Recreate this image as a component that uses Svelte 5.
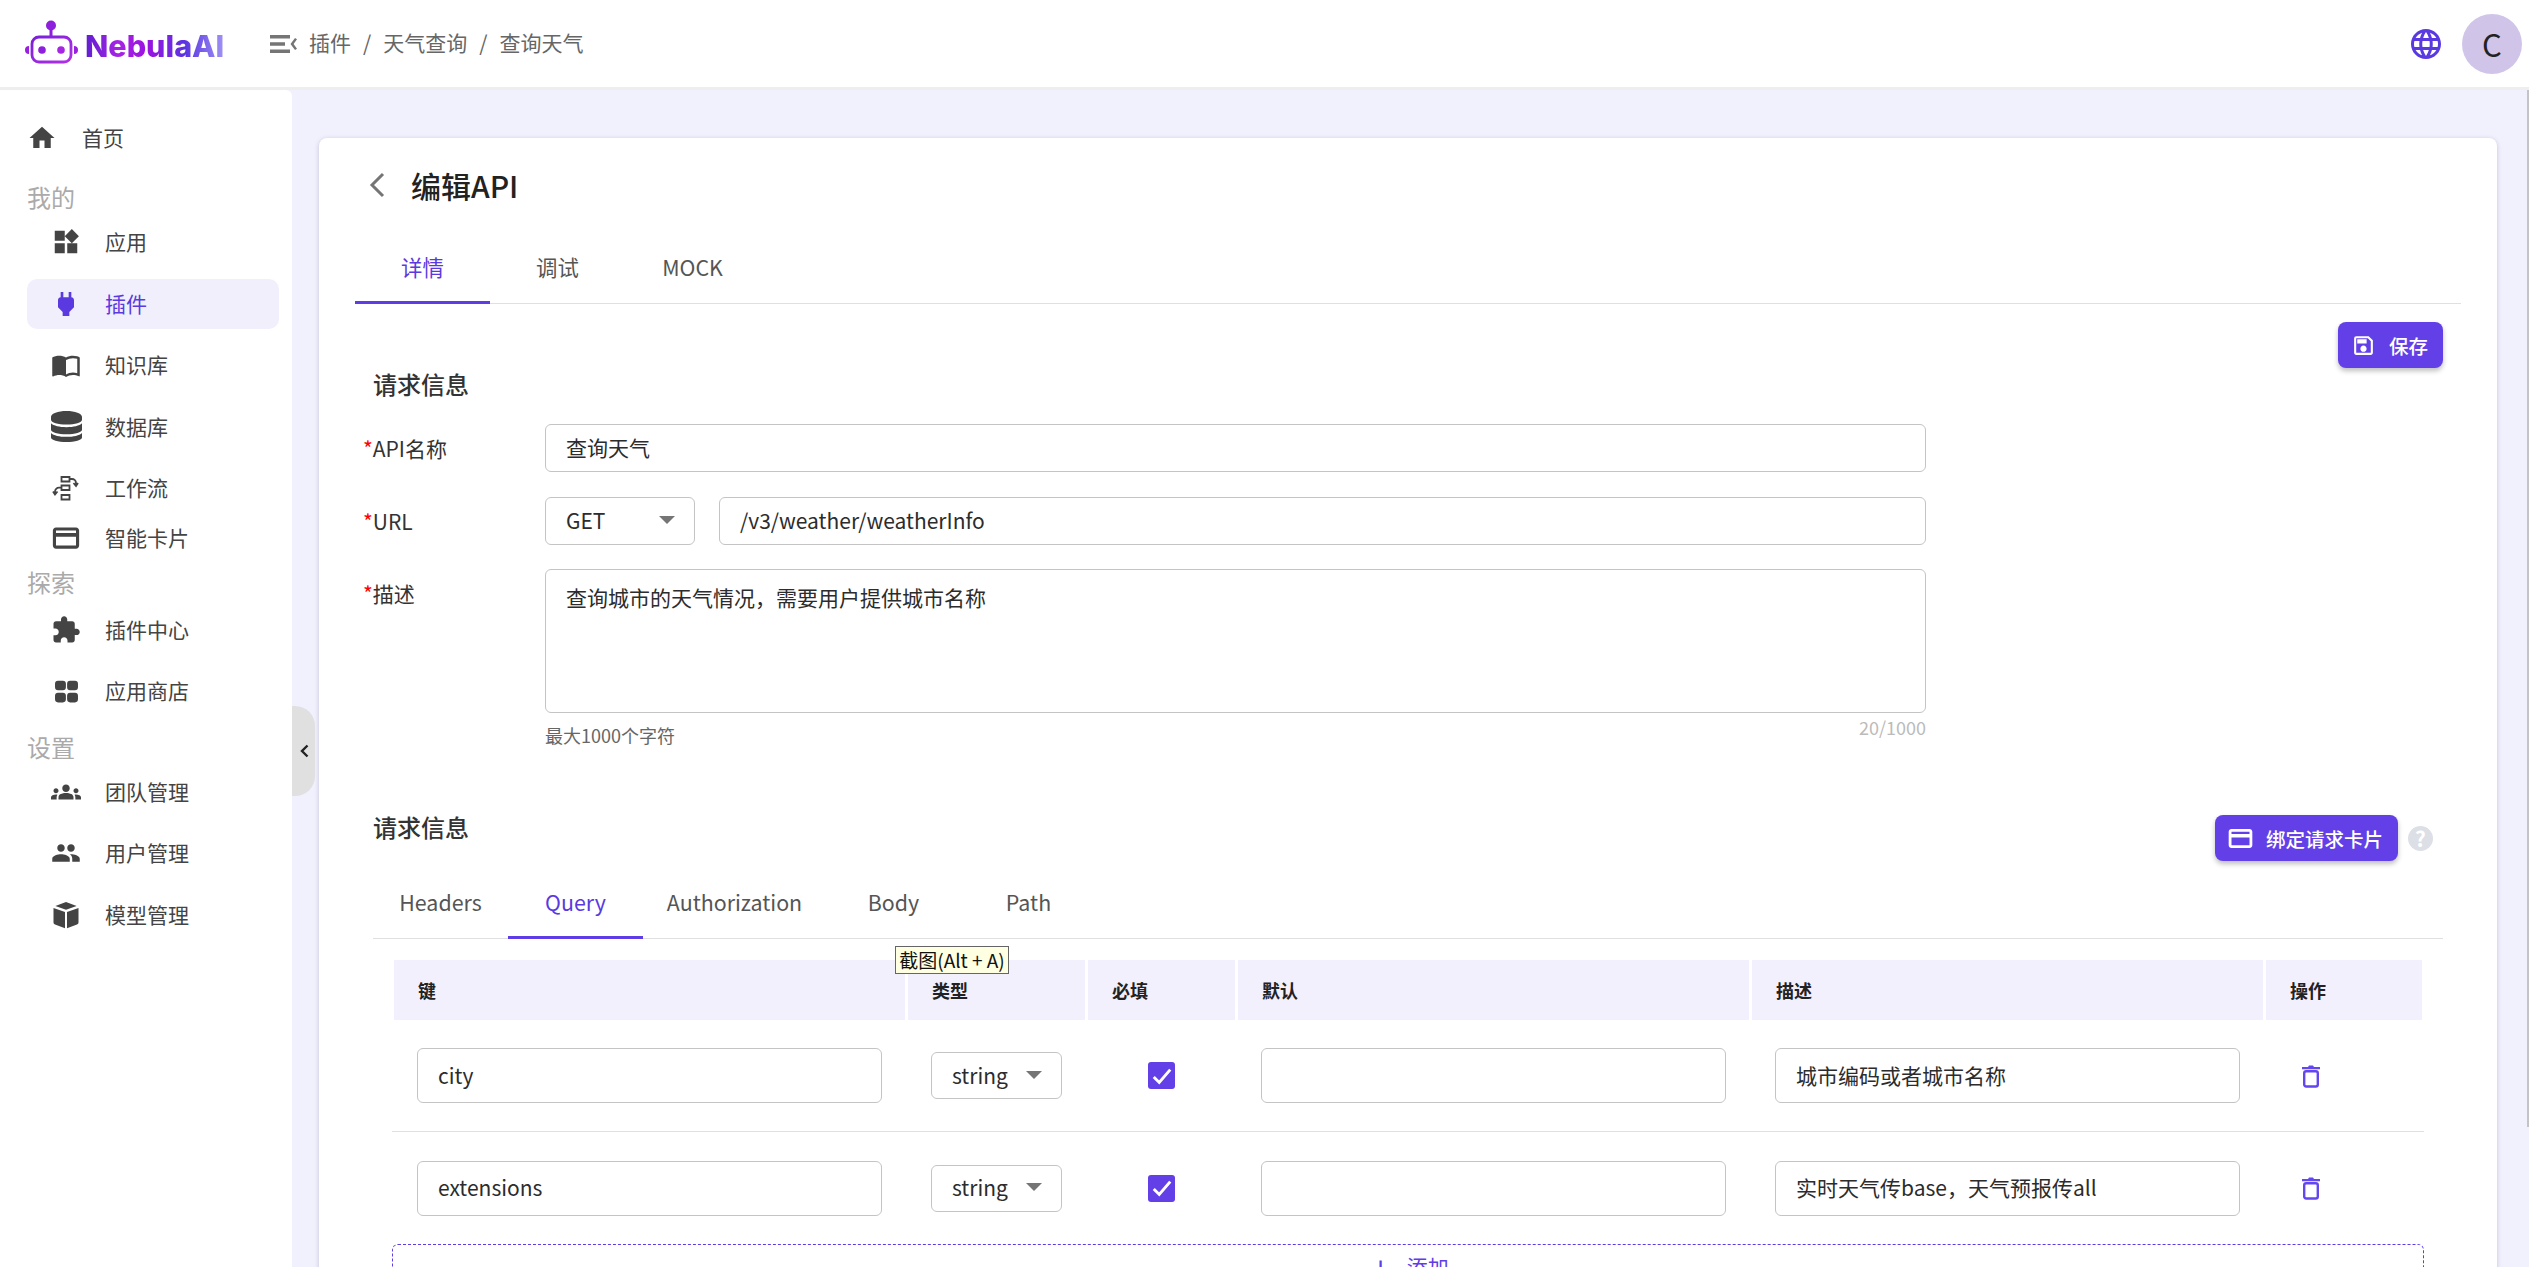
<script>
  const icons = {
    home: "M10 20v-6h4v6h5v-8h3L12 3 2 12h3v8z",
    widgets: "M13 13v8h8v-8h-8zM3 21h8v-8H3v8zM3 3v8h8V3H3zm13.66-1.31L11 7.34 16.66 13l5.66-5.66-5.66-5.65z",
    plug: "M16.01 7L16 3h-2v4h-4V3H8v4h-.01C7 6.99 6 7.99 6 8.99v5.49L9.5 18v3h5v-3l3.5-3.51v-5.5c0-1-1-2-1.99-1.99z",
    book: "M21 5c-1.11-.35-2.33-.5-3.5-.5-1.95 0-4.05.4-5.5 1.5-1.45-1.1-3.55-1.5-5.5-1.5S2.45 4.9 1 6v14.65c0 .25.25.5.5.5.1 0 .15-.05.25-.05C3.1 20.45 5.05 20 6.5 20c1.95 0 4.05.4 5.5 1.5 1.35-.85 3.8-1.5 5.5-1.5 1.65 0 3.35.3 4.75 1.05.1.05.15.05.25.05.25 0 .5-.25.5-.5V6c-.6-.45-1.25-.75-2-1zm0 13.5c-1.1-.35-2.3-.5-3.5-.5-1.7 0-4.15.65-5.5 1.5V8c1.35-.85 3.8-1.5 5.5-1.5 1.2 0 2.4.15 3.5.5v11.5z",
    db: "M0 4.5C0 2 5.4 0 12 0s12 2 12 4.5v2.3C24 9 18.6 10.5 12 10.5S0 9 0 6.8zM0 9.5c2 2 6.5 3 12 3s10-1 12-3v5c0 2-5.4 3.5-12 3.5S0 16.5 0 14.5zM0 17c2 2 6.5 3 12 3s10-1 12-3v3.5C24 22.5 18.6 24 12 24S0 22.5 0 20.5z",
    card: "M20 3.5H4C2.6 3.5 1.5 4.6 1.5 6v12c0 1.4 1.1 2.5 2.5 2.5h16c1.4 0 2.5-1.1 2.5-2.5V6c0-1.4-1.1-2.5-2.5-2.5zm0 14.5H4v-7h16v7zm0-10H4V6h16v2z",
    puzzle: "M20.5 11H19V7c0-1.1-.9-2-2-2h-4V3.5C13 2.12 11.88 1 10.5 1S8 2.12 8 3.5V5H4c-1.1 0-1.99.9-1.99 2v3.8H3.5c1.49 0 2.7 1.21 2.7 2.7s-1.21 2.7-2.7 2.7H2V20c0 1.1.9 2 2 2h3.8v-1.5c0-1.49 1.21-2.7 2.7-2.7 1.49 0 2.7 1.21 2.7 2.7V22H17c1.1 0 2-.9 2-2v-4h1.5c1.38 0 2.5-1.12 2.5-2.5S21.88 11 20.5 11z",
    apps: "M5 3h4a2.5 2.5 0 0 1 2.5 2.5v3A2.5 2.5 0 0 1 9 11H5a2.5 2.5 0 0 1-2.5-2.5v-3A2.5 2.5 0 0 1 5 3zM15 3h4a2.5 2.5 0 0 1 2.5 2.5v3A2.5 2.5 0 0 1 19 11h-4a2.5 2.5 0 0 1-2.5-2.5v-3A2.5 2.5 0 0 1 15 3zM5 13h4a2.5 2.5 0 0 1 2.5 2.5v3A2.5 2.5 0 0 1 9 21H5a2.5 2.5 0 0 1-2.5-2.5v-3A2.5 2.5 0 0 1 5 13zM15 13h4a2.5 2.5 0 0 1 2.5 2.5v3A2.5 2.5 0 0 1 19 21h-4a2.5 2.5 0 0 1-2.5-2.5v-3A2.5 2.5 0 0 1 15 13z",
    groups: "M12 12.75c1.63 0 3.07.39 4.24.9 1.08.48 1.76 1.56 1.76 2.73V18H6v-1.61c0-1.18.68-2.26 1.76-2.73 1.17-.52 2.61-.91 4.24-.91zM4 13c1.1 0 2-.9 2-2s-.9-2-2-2-2 .9-2 2 .9 2 2 2zm1.13 1.1c-.37-.06-.74-.1-1.13-.1-.99 0-1.93.21-2.78.58C.48 14.9 0 15.62 0 16.43V18h4.5v-1.61c0-.83.23-1.61.63-2.29zM20 13c1.1 0 2-.9 2-2s-.9-2-2-2-2 .9-2 2 .9 2 2 2zm4 3.43c0-.81-.48-1.53-1.22-1.85-.85-.37-1.79-.58-2.78-.58-.39 0-.76.04-1.13.1.4.68.63 1.46.63 2.29V18H24v-1.57zM12 6c1.66 0 3 1.34 3 3s-1.34 3-3 3-3-1.34-3-3 1.34-3 3-3z",
    people: "M16 11c1.66 0 2.99-1.34 2.99-3S17.66 5 16 5c-1.66 0-3 1.34-3 3s1.34 3 3 3zm-8 0c1.66 0 2.99-1.34 2.99-3S9.66 5 8 5C6.34 5 5 6.34 5 8s1.34 3 3 3zm0 2c-2.33 0-7 1.17-7 3.5V19h14v-2.5c0-2.33-4.67-3.5-7-3.5zm8 0c-.29 0-.62.02-.97.05 1.16.84 1.97 1.97 1.97 3.45V19h6v-2.5c0-2.33-4.67-3.5-7-3.5z",
    cube: "M12 1.5 20.5 4.7 12 7.8 3.5 4.7zM2 6.3l9.2 3.3V22.5L3.2 19.6A1.8 1.8 0 0 1 2 17.9zM22 6.3l-9.2 3.3V22.5l8-2.9a1.8 1.8 0 0 0 1.2-1.7z",
    flow: "M7.5 1h8v4.5h-8zM7.5 9.5h8V14h-8zM7.5 19h8v4.5h-8zM15.5 3h2.5a4 4 0 0 1 4 4v1.5M19.5 7l2.5 3 2-3M7.5 11.7H5a4 4 0 0 0-4 4v1.5M-1 15.5l2 3 2.5-3"
  };

  const nav = [
    { kind: "top", label: "首页", icon: "home" },
    { kind: "head", label: "我的", variant: "mine" },
    { label: "应用", icon: "widgets", size: 30 },
    { label: "插件", icon: "plug", size: 32, active: true },
    { label: "知识库", icon: "book" },
    { label: "数据库", icon: "db", size: 31 },
    { label: "工作流", icon: "flow", line: true, size: 24 },
    { kind: "slim", label: "智能卡片", icon: "card" },
    { kind: "head", label: "探索" },
    { label: "插件中心", icon: "puzzle" },
    { label: "应用商店", icon: "apps", size: 29 },
    { kind: "head", label: "设置", variant: "settings" },
    { label: "团队管理", icon: "groups" },
    { label: "用户管理", icon: "people" },
    { label: "模型管理", icon: "cube" }
  ];

  const crumbs = ["插件", "天气查询", "查询天气"];
  const paramTabs = ["Headers", "Query", "Authorization", "Body", "Path"];
  const columns = ["键", "类型", "必填", "默认", "描述", "操作"];
  const params = [
    { key: "city", type: "string", desc: "城市编码或者城市名称" },
    { key: "extensions", type: "string", desc: "实时天气传base，天气预报传all" }
  ];
</script>

<div class="page">
  <header class="topbar">
    <div class="brand">
      <svg class="logo" width="56" height="46" viewBox="0 0 56 46" aria-hidden="true">
        <defs>
          <linearGradient id="logoGrad" x1="0" y1="0" x2="1" y2="1">
            <stop offset="0" stop-color="#7a1fd8" />
            <stop offset="1" stop-color="#b030e8" />
          </linearGradient>
        </defs>
        <circle cx="27" cy="6.5" r="5" fill="#8e1fdc" />
        <rect x="25.5" y="10" width="3" height="8" fill="#8e1fdc" />
        <rect x="8" y="18" width="39" height="25" rx="7" fill="none" stroke="url(#logoGrad)" stroke-width="2.8" />
        <circle cx="18" cy="31" r="3.8" fill="#8e1fdc" />
        <circle cx="37" cy="31" r="3.8" fill="#a626e4" />
        <path d="M5 27v8a4 4 0 0 1 0-8zM50 27v8a4 4 0 0 0 0-8z" fill="#9a20e0" />
      </svg>
      <span class="wordmark">NebulaAI</span>
    </div>
    <svg class="menu-icon" width="27" height="18" viewBox="0 0 27 18" aria-hidden="true">
      <path d="M0 0h20v3.5H0zM0 7.2h15v3.5H0zM0 14.5h20V18H0zM27 4.2 23.6 9l3.4 4.8-2 1.2-4.5-6 4.5-6z" fill="#757575" />
    </svg>
    <nav class="crumbs">
      {#each crumbs as crumb, i}
        {#if i > 0}<span>/</span>{/if}
        <span>{crumb}</span>
      {/each}
    </nav>
    <div class="top-right">
      <svg width="36" height="36" viewBox="0 0 24 24" aria-hidden="true">
        <path fill="#5a3ae0" d="M11.99 2C6.47 2 2 6.48 2 12s4.47 10 9.99 10C17.52 22 22 17.52 22 12S17.52 2 11.99 2zm6.93 6h-2.95c-.32-1.25-.78-2.45-1.38-3.56 1.84.63 3.37 1.91 4.33 3.56zM12 4.04c.83 1.2 1.48 2.53 1.91 3.96h-3.82c.43-1.43 1.08-2.76 1.91-3.96zM4.26 14C4.1 13.36 4 12.69 4 12s.1-1.36.26-2h3.38c-.08.66-.14 1.32-.14 2 0 .68.06 1.34.14 2H4.26zm.82 2h2.95c.32 1.25.78 2.45 1.38 3.56-1.84-.63-3.37-1.9-4.33-3.56zm2.95-8H5.08c.96-1.66 2.49-2.93 4.33-3.56C8.81 5.55 8.35 6.75 8.03 8zM12 19.96c-.83-1.2-1.48-2.53-1.91-3.96h3.82c-.43 1.43-1.08 2.76-1.91 3.96zM14.34 14H9.66c-.09-.66-.16-1.32-.16-2 0-.68.07-1.35.16-2h4.68c.09.65.16 1.32.16 2 0 .68-.07 1.34-.16 2zm.25 5.56c.6-1.11 1.06-2.31 1.38-3.56h2.95c-.96 1.65-2.49 2.93-4.33 3.56zM16.36 14c.08-.66.14-1.32.14-2 0-.68-.06-1.34-.14-2h3.38c.16.64.26 1.31.26 2s-.1 1.36-.26 2h-3.38z" />
      </svg>
      <div class="avatar">C</div>
    </div>
  </header>

  <div class="body">
    <aside class="sidebar">
      {#each nav as item}
        {#if item.kind === "head"}
          <div class="nav-head {item.variant ?? ''}">{item.label}</div>
        {:else}
          <div class="nav-item {item.kind ?? ''}" class:active={item.active}>
            <span class="nav-icon">
              <svg width={item.size ?? 30} height={item.size ?? 30} viewBox="0 0 24 24" aria-hidden="true" class:line={item.line} overflow="visible">
                <path d={icons[item.icon]} />
              </svg>
            </span>
            <span class="nav-text">{item.label}</span>
          </div>
        {/if}
      {/each}
    </aside>

    <main class="main">
      <div class="card">
        <div class="title-row">
          <svg width="16" height="26" viewBox="0 0 16 26" aria-hidden="true">
            <path d="M14 2 3 13l11 11" fill="none" stroke="#757575" stroke-width="3" />
          </svg>
          <h1>编辑API</h1>
        </div>

        <div class="tabs main-tabs">
          <div class="tab active">详情</div>
          <div class="tab">调试</div>
          <div class="tab">MOCK</div>
        </div>

        <div class="save-row">
          <div class="btn save-btn">
            <svg width="25" height="25" viewBox="0 0 24 24" aria-hidden="true">
              <path d="M17 3H5a2 2 0 0 0-2 2v14c0 1.1.9 2 2 2h14c1.1 0 2-.9 2-2V7l-4-4zm2 16H5V5h11.17L19 7.83V19zm-7-7c-1.66 0-3 1.34-3 3s1.34 3 3 3 3-1.34 3-3-1.34-3-3-3zM6 6h9v4H6z" />
            </svg>
            保存
          </div>
        </div>

        <h2 class="section-title">请求信息</h2>

        <div class="form">
          <div class="field first">
            <label for="api-name"><i>*</i>API名称</label>
            <input id="api-name" class="text-input" value="查询天气" />
          </div>
          <div class="field url">
            <label for="api-url"><i>*</i>URL</label>
            <div class="select method"><span>GET</span><b></b></div>
            <input id="api-url" class="text-input" value="/v3/weather/weatherInfo" />
          </div>
          <div class="field desc">
            <label for="api-desc"><i>*</i>描述</label>
            <textarea id="api-desc">查询城市的天气情况，需要用户提供城市名称</textarea>
          </div>
          <div class="helper">
            <span>最大1000个字符</span>
            <span class="count">20/1000</span>
          </div>
        </div>

        <div class="section-bar">
          <h2 class="section-title">请求信息</h2>
          <div class="bar-actions">
            <div class="btn bind-btn">
              <svg width="27" height="27" viewBox="0 0 24 24" aria-hidden="true"><path d={icons.card} /></svg>
              绑定请求卡片
            </div>
            <span class="help">?</span>
          </div>
        </div>

        <div class="tabs param-tabs">
          {#each paramTabs as tab}
            <div class="tab" class:active={tab === "Query"} class:wide={tab === "Authorization"}>{tab}</div>
          {/each}
        </div>

        <div class="grid head-row">
          {#each columns as col}
            <div class="th">{col}</div>
          {/each}
        </div>
        {#each params as p, i}
          <div class="grid row" class:ruled={i < params.length - 1}>
            <div class="cell"><input class="text-input tall" value={p.key} /></div>
            <div class="cell"><div class="select type"><span>{p.type}</span><b></b></div></div>
            <div class="cell center">
              <span class="check">
                <svg width="22" height="22" viewBox="0 0 24 24" aria-hidden="true">
                  <path d="M3 13l6 6L21 5" fill="none" stroke="#fff" stroke-width="3.2" />
                </svg>
              </span>
            </div>
            <div class="cell"><input class="text-input tall" value="" /></div>
            <div class="cell"><input class="text-input tall" value={p.desc} /></div>
            <div class="cell">
              <svg class="trash" width="18" height="24" viewBox="0 0 18 24" aria-hidden="true">
                <path d="M0 3h6l1-1.5h4L12 3h6v2.2H0z" fill="#6346f0" />
                <rect x="2.2" y="7.2" width="13.6" height="15.3" rx="2" fill="none" stroke="#6346f0" stroke-width="2.4" />
              </svg>
            </div>
          </div>
        {/each}
        <div class="add-box"><span class="plus">+</span>添加</div>
      </div>
    </main>

    <div class="collapse">
      <svg width="10" height="14" viewBox="0 0 10 14" aria-hidden="true">
        <path d="M8.5 1.5 3 7l5.5 5.5" fill="none" stroke="#222" stroke-width="2.4" />
      </svg>
    </div>
    <div class="scroll-thumb"></div>
  </div>

  <div class="tooltip">截图(Alt + A)</div>
</div>

<style>
  :global(body) {
    margin: 0;
    font-family: "Noto Sans CJK SC", "Noto Sans", sans-serif;
    color: #333;
  }

  .page {
    position: relative;
    width: 2529px;
    height: 1267px;
    overflow: hidden;
    font-size: 21px;
    background: #f1f0fd;
  }

  .topbar {
    display: flex;
    align-items: center;
    height: 87px;
    padding-left: 24px;
    padding-right: 7px;
    background: #fff;
    border-bottom: 3px solid #eee;
  }

  .brand {
    display: flex;
    align-items: center;
    gap: 5px;
    width: 246px;
    margin-top: -2px;
  }

  .logo {
    margin-top: -2px;
  }

  .wordmark {
    font-family: Inter, sans-serif;
    font-weight: 800;
    font-size: 30.5px;
    margin-top: 5px;
    background: linear-gradient(90deg, #5f1fd0 0%, #a624e4 24%, #9a12e0 45%, #5a34e0 72%, #9f92f5 100%);
    -webkit-background-clip: text;
    background-clip: text;
    color: transparent;
  }

  .crumbs {
    display: flex;
    gap: 12px;
    margin-left: 12px;
    padding-bottom: 3px;
    color: #666;
  }

  .top-right {
    display: flex;
    align-items: center;
    gap: 18px;
    margin-left: auto;
  }

  .avatar {
    display: flex;
    align-items: center;
    justify-content: center;
    width: 60px;
    height: 60px;
    border-radius: 50%;
    background: #d1c4e9;
    font-size: 31px;
    color: #222;
  }

  .body {
    position: relative;
    display: flex;
    height: 1177px;
  }

  .sidebar {
    width: 292px;
    flex: none;
    padding: 22.5px 13px 0 27px;
    box-sizing: border-box;
    background: #fff;
    border-top-right-radius: 6px;
    color: #444;
  }

  .nav-item {
    display: flex;
    align-items: center;
    gap: 21px;
    height: 50px;
    margin-bottom: 11.5px;
    padding-left: 21px;
    border-radius: 10px;
  }

  .nav-item.top {
    margin-left: -3px;
    padding-left: 0;
    margin-bottom: 15.5px;
    gap: 22px;
  }

  .nav-item.slim {
    margin-top: -7px;
    height: 40px;
    margin-bottom: 5px;
  }

  .nav-item.active {
    background: #f1effc;
    color: #5a3ae0;
  }

  .nav-icon {
    display: flex;
    align-items: center;
    justify-content: center;
    width: 36px;
  }

  .nav-icon svg {
    fill: currentColor;
  }

  .nav-icon svg.line {
    fill: none;
    stroke: currentColor;
    stroke-width: 1.8;
  }

  .nav-text {
    padding-bottom: 2px;
  }

  .nav-head {
    height: 34px;
    line-height: 37px;
    margin-bottom: 8px;
    font-size: 24px;
    color: #aaa;
  }

  .nav-head.mine {
    margin-bottom: 5px;
  }

  .nav-head.settings {
    margin-top: 8.5px;
    margin-bottom: 5px;
  }

  .main {
    flex: 1;
    min-width: 0;
    padding: 48px 32px 0 27px;
  }

  .card {
    height: 1300px;
    padding: 0 36px;
    background: #fff;
    border-radius: 8px;
    box-shadow: 0 1px 4px rgba(60, 60, 100, 0.25);
  }

  .title-row {
    display: flex;
    align-items: center;
    gap: 26px;
    box-sizing: border-box;
    height: 105px;
    padding-left: 14px;
    padding-bottom: 11px;
  }

  h1 {
    margin: 0;
    font-size: 30px;
    font-weight: 500;
    color: #222;
  }

  .tabs {
    display: flex;
    border-bottom: 1px solid #e0e0e0;
  }

  .tab {
    width: 135px;
    height: 60px;
    line-height: 48px;
    text-align: center;
    font-size: 21.4px;
    color: #555;
    position: relative;
  }

  .tab.wide {
    width: 183px;
  }

  .tab.active {
    color: #5a3ae0;
  }

  .tab.active::after {
    content: "";
    position: absolute;
    left: 0;
    right: 0;
    bottom: -1px;
    height: 3px;
    background: #5f3de6;
  }

  .save-row {
    display: flex;
    justify-content: flex-end;
    margin-top: 18px;
    padding-right: 18px;
  }

  .btn {
    display: flex;
    align-items: center;
    box-sizing: border-box;
    height: 46px;
    border-radius: 8px;
    background: #633fe8;
    color: #fff;
    font-size: 19.5px;
    font-weight: 500;
    box-shadow: 0 3px 5px rgba(0, 0, 0, 0.25);
  }

  .btn svg {
    fill: #fff;
  }

  .save-btn {
    width: 105px;
    gap: 13px;
    padding-left: 13px;
  }

  .section-title {
    height: 34px;
    line-height: 32px;
    margin: 0 0 0 18px;
    font-size: 24px;
    font-weight: 500;
    color: #333;
  }

  .section-bar .section-title {
    margin-top: -4px;
  }

  .form {
    width: 1563px;
    margin-left: 8px;
  }

  .field {
    display: flex;
    gap: 0;
    margin-top: 25px;
  }

  .field.first {
    margin-top: 22px;
  }

  .field.desc {
    margin-top: 24px;
  }

  .field label {
    flex: none;
    width: 182px;
    line-height: 48px;
    color: #333;
  }

  .field i {
    font-style: normal;
    color: #f00;
  }

  .text-input,
  textarea {
    flex: 1;
    min-width: 0;
    box-sizing: border-box;
    width: 100%;
    height: 48px;
    padding: 0 20px 2px;
    border: 1px solid #c4c4c4;
    border-radius: 6px;
    background: #fff;
    font: inherit;
    color: #2c2c2c;
    outline: none;
  }

  .text-input.tall {
    height: 55px;
  }

  textarea {
    height: 144px;
    padding-top: 12px;
    line-height: 30px;
    resize: none;
  }

  .select {
    display: flex;
    align-items: center;
    justify-content: space-between;
    box-sizing: border-box;
    flex: none;
    border: 1px solid #c4c4c4;
    border-radius: 6px;
    color: #2c2c2c;
  }

  .select span {
    padding-bottom: 2px;
  }

  .select b {
    width: 0;
    height: 0;
    margin-top: -2px;
    border-left: 8px solid transparent;
    border-right: 8px solid transparent;
    border-top: 8px solid #757575;
  }

  .select.method {
    width: 150px;
    height: 48px;
    margin-right: 24px;
    padding: 0 19px 0 20px;
  }

  .select.type {
    width: 131px;
    height: 47px;
    padding: 0 19px 0 20px;
  }

  .helper {
    display: flex;
    justify-content: space-between;
    margin-left: 182px;
    font-size: 18px;
    line-height: 26px;
    color: #666;
  }

  .helper > span:first-child {
    margin-top: 9px;
  }

  .count {
    margin-top: 1px;
    color: #bbb;
  }

  .section-bar {
    display: flex;
    align-items: flex-start;
    justify-content: space-between;
    height: 46px;
    margin-top: 67px;
    padding-right: 28px;
  }

  .bar-actions {
    display: flex;
    align-items: center;
    gap: 10px;
  }

  .bind-btn {
    width: 183px;
    gap: 12px;
    padding-left: 12px;
  }

  .help {
    display: flex;
    align-items: center;
    justify-content: center;
    width: 25px;
    height: 25px;
    border-radius: 50%;
    background: #dcdfe6;
    color: #fff;
    font-size: 21px;
    font-weight: 700;
  }

  .param-tabs {
    margin: 17px 18px 0;
  }

  .grid {
    display: grid;
    grid-template-columns: 511px 177px 147px 511px 511px 156px;
    column-gap: 3px;
    margin-left: 39px;
    margin-right: 39px;
  }

  .head-row {
    margin-top: 21px;
  }

  .th {
    height: 60px;
    line-height: 60px;
    padding-left: 24px;
    background: #f3f0fe;
    font-size: 18px;
    font-weight: 700;
    color: #222;
  }

  .row {
    height: 112px;
    box-sizing: border-box;
    align-items: center;
    margin-left: 37px;
    margin-right: 37px;
    padding: 0 2px;
  }

  .row.ruled {
    border-bottom: 1px solid #e0e0e0;
  }

  .cell {
    padding: 0 23px;
    min-width: 0;
    display: flex;
    align-items: center;
  }

  .cell.center {
    justify-content: center;
    padding: 0;
  }

  .check {
    display: flex;
    align-items: center;
    justify-content: center;
    width: 27px;
    height: 27px;
    border-radius: 3px;
    background: #633fe8;
  }

  .trash {
    margin-left: 13px;
  }

  .add-box {
    display: flex;
    align-items: center;
    justify-content: center;
    gap: 18px;
    height: 42px;
    margin: 0 37px;
    padding: 0 0 2px 5px;
    border: 1px dashed #5f3de6;
    border-radius: 6px;
    color: #5f3de6;
  }

  .plus {
    font-size: 30px;
    line-height: 1;
  }

  .collapse {
    position: absolute;
    left: 292px;
    top: 616px;
    display: flex;
    align-items: center;
    justify-content: center;
    width: 23px;
    height: 90px;
    background: #e0e0e0;
    border-radius: 0 20px 20px 0;
  }

  .scroll-thumb {
    position: absolute;
    right: 0;
    top: 0;
    width: 2px;
    height: 1037px;
    background: #c4c4c4;
  }

  .tooltip {
    position: absolute;
    left: 895px;
    top: 946px;
    box-sizing: border-box;
    height: 28px;
    width: 114px;
    line-height: 26px;
    text-align: center;
    white-space: nowrap;
    border: 1px solid #666;
    background: #ffffe1;
    font-size: 19px;
    color: #111;
  }
</style>
